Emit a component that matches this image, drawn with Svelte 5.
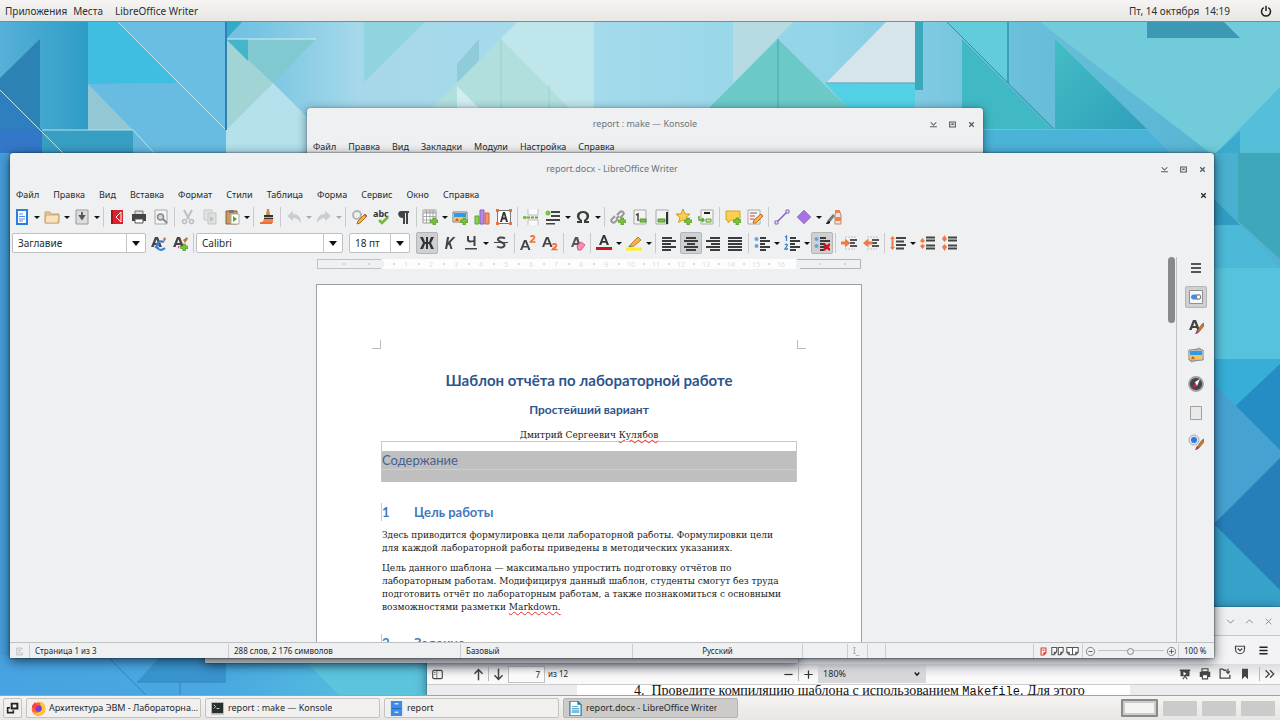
<script>
  const A = (c = '#444') => `<path d="M1 12 5 2h3l4 10H9.200l-.7-2H4.400l-.7 2zM5.100 8h2.700L6.500 4.200z" fill="${c}"/>`;
  const plus = '<path d="M11 9h2.500v2H16v2.500h-2.500V16H11v-2.500H8.500V11H11z" fill="#7cc242" stroke="#4e9a1c" stroke-width=".7"/>';
  const sheet = (x = 2, w = 12) => `<path d="M${x} 1h${w}v14H${x}z" fill="#f4f4f4" stroke="#aaa"/>`;
  const brush = '<path d="m9 13 5-7 2-1v3l-5 6z" fill="#c9772e" stroke="#7a4a1e" stroke-width=".5"/><path d="m9 12 2 2c-1 1.500-3 2-4 2 1-1 1-3 2-4z" fill="#9b3c7a"/>';
  const photo = '<path d="M1 3h14v10H1z" fill="#fff" stroke="#777"/><path d="M2 4h12v5H2z" fill="#2e9be6"/><path d="M2 8h12v4H2z" fill="#f6c35c"/><path d="m3 12 2-3 2 3z" fill="#d9532c"/>';
  const lines = (rows) => rows.map(([x, w], i) => `<path d="M${x} ${2 + i * 3}h${w}v2H${x}z" fill="#3c3c3c"/>`).join('');
  const orange = '#ee7b45';

  const icons = {
    new: '<path d="M3 1h10v14H3z" fill="#fff" stroke="#2b7de0" stroke-width="2"/><path d="M5 5h4M5 7.500h6M5 10h6M5 12h4" stroke="#4a90e2"/>',
    open: '<path d="M1 3h5l1 2h8v9H1z" fill="#e5c79a" stroke="#c9a468"/><path d="M2 6h13l-1 8H1z" fill="#f8e3c0" stroke="#d1ab70"/>',
    save: '<path d="M2 1h12v14H2z" fill="#dcdcdc" stroke="#9a9a9a"/><path d="M8 3v5M6 7l2 3 2-3z" stroke="#555" stroke-width="1.800" fill="#555"/>',
    pdf: '<path d="M2 1h12v14H2z" fill="#d8232f"/><path d="M2 1h2v14H2z" fill="#a8101c"/><path d="M12 3 7 8l5 5M12 3v10" stroke="#fff" fill="none"/>',
    print: '<path d="M4 2h8v4H4z" fill="#ddd" stroke="#777"/><path d="M1 5h14v7H1z" fill="#444"/><path d="M4 10h8v4H4z" fill="#fff" stroke="#555"/>',
    preview: sheet() + '<circle cx="7.500" cy="8" r="3" fill="#cfd8df" stroke="#888" stroke-width="1.500"/><path d="m10 10 4 4" stroke="#888" stroke-width="2"/>',
    cut: '<path d="m4 1 5 9M12 1 7 10" stroke="#b4b4b4" stroke-width="2"/><circle cx="4.500" cy="12.500" r="2" fill="none" stroke="#b0b0b0" stroke-width="1.500"/><circle cx="11.500" cy="12.500" r="2" fill="none" stroke="#b0b0b0" stroke-width="1.500"/>',
    copy: '<path d="M2 1h8v10H2z" fill="#e2e2e2" stroke="#c0c0c0"/><path d="M6 4h8v11H6z" fill="#dcdcdc" stroke="#bbb"/><path d="m8 7 4 3-4 3z" fill="#b5b5b5"/>',
    paste: '<path d="M2 2h11v13H2z" fill="#c89b5e" stroke="#8a6430"/><path d="M5 1h5v3H5z" fill="#777"/><path d="M7 5h8v10H7z" fill="#fff" stroke="#aaa"/><path d="m9 7 4 3-4 3z" fill="#5aa82b"/>',
    clone: '<path d="M8 0h2l1 6H7z" fill="#c98b45"/><path d="M5 6h9v4H5z" fill="#333"/><path d="M5 8h9v1H5z" fill="#ddb45c"/><path d="M5 10h9v4H3z" fill="#f0834a"/><path d="M1 13h12v2H1z" fill="#ee6f35"/>',
    undo: '<path d="m1 7 6-5v3c5 0 8 3 8 9-2-3-4-5-8-5v3z" fill="#c3c5c7"/>',
    redo: '<path d="M15 7 9 2v3C4 5 1 8 1 14c2-3 4-5 8-5v3z" fill="#c3c5c7"/>',
    find: '<circle cx="6" cy="6" r="4" fill="#eee" stroke="#b5b5b5" stroke-width="2"/><path d="m6 15 1-3 7-7 2 2-7 7z" fill="#f5b83d" stroke="#a86a2a"/><path d="m13 6 1-1 2 2-1 1z" fill="#e0446a"/>',
    spell: '<text x="0" y="8" font-size="9" font-weight="700" font-family="Noto Sans" fill="#333">abc</text><path d="m6 11 3 3 6-6" stroke="#6fb93c" stroke-width="2.500" fill="none"/>',
    pilcrow: '<path d="M6 2h8v2h-1v11h-2V4h-1v11H8V9C2 9 2 2 6 2z" fill="#444"/>',
    table: '<path d="M1 1h13v13H1z" fill="#fff" stroke="#999"/><path d="M1 1h13v3H1z" fill="#ccc"/><path d="M1 4h13M1 7.500h13M1 11h13M4.500 1v13M8 1v13M11 1v13" stroke="#999" stroke-width=".8"/>' + plus,
    image: photo + plus,
    chart: '<path d="M1 7h4v8H1z" fill="#8bcf5a" stroke="#5aa82b"/><path d="M6 1h4v14H6z" fill="#b98be8" stroke="#8a5cc0"/><path d="M11 4h4v11h-4z" fill="#f59468" stroke="#d0603a"/>',
    textbox: '<path d="M1.500 1.500h13v13h-13z" fill="#fff" stroke="#777"/><path d="M4 13 7 3h2l3 10h-2l-.7-2.500H6.700L6 13zM7.200 8.500h1.600L8 5.500z" fill="#333"/><path d="M0 0h3v3H0zM13 0h3v3h-3zM0 13h3v3H0zM13 13h3v3h-3z" fill="#ee6f45"/>',
    pagebreak: '<path d="M5 0v6h10V0M5 16v-5h10v5" fill="#fafafa" stroke="#c0c0c0"/><path d="M0 8.500h16" stroke="#62ad30" stroke-width="2" stroke-dasharray="3 1"/><circle cx="2" cy="8.500" r="1.800" fill="#7cc242"/>',
    field: '<path d="M6 2h9v2H6zM6 6h9v2H6zM1 10h14v2H1zM1 14h9v1.500H1z" fill="#444"/><circle cx="3" cy="4" r="2.500" fill="#7cc242"/>',
    omega: '<path d="M2 14v-2h3C0 9 1 2 8 2s8 7 3 10h3v2H9v-3c4-2 3-7-1-7s-5 5-1 7v3z" fill="#3c3c3c"/>',
    link: '<path d="m7 6 3-3c2-2 5 1 3 3l-3 3M9 7 6 10M8 10l-3 3c-2 2-5-1-3-3l3-3" fill="none" stroke="#999" stroke-width="2"/>' + plus,
    footnote: sheet() + '<path d="m4 6 2-1v7" fill="none" stroke="#444" stroke-width="1.500"/><path d="M8 10h6v3H8z" fill="#7cc242" stroke="#4e9a1c"/>',
    endnote: sheet() + '<path d="M12 3h2v12h-2z" fill="#333"/><path d="M4 10h7v3H4z" fill="#7cc242" stroke="#4e9a1c"/>',
    bookmark: '<path d="m7 0 2 5h5l-4 3.500 1.500 5L7 11l-4.500 2.500L4 8.500 0 5h5z" fill="#fbd04c" stroke="#d29a22"/>' + plus,
    crossref: '<path d="M3 1h12v14H3z" fill="#f4f4f4" stroke="#aaa"/><path d="M6 4h6" stroke="#222" stroke-width="2"/><path d="M8 10h5v3H8z" fill="#cbe6b8" stroke="#5aa82b"/><path d="M1 7v4h5M4 9l2 2-2 2" fill="none" stroke="#5aa82b" stroke-width="1.500"/>',
    comment: '<path d="M1 2h14v9H6l-3 3v-3H1z" fill="#fbd04c" stroke="#d2a22e"/>' + plus,
    track: sheet(1, 12) + '<path d="M3 4h7M3 7h5M3 10h4" stroke="#b34a5c"/><path d="m6 14 1-3 7-6 2 2-7 7z" fill="#f5b83d" stroke="#b8662a"/>',
    line: '<path d="M2.500 13.500 13.500 2.500" stroke="#8a5cc0" stroke-width="1.500"/><path d="M1 12h3v3H1zM12 1h3v3h-3z" fill="#eee" stroke="#8a5cc0"/>',
    shape: '<path d="m8 1 7 7-7 7-7-7z" fill="#a674e0" stroke="#a98ad0"/>',
    draw: '<path d="M10 3h4l1 3v9H9V6z" fill="#e5e5e5" stroke="#c08a70"/><path d="M9 1h5v3H9zM9 8h6v4H9z" fill="#f0834a"/><path d="m1 12 6-7 2 2-5 6z" fill="#777"/><path d="M0 15c1-3 2-3 4-3v2c-1 1-2 1-4 1z" fill="#222"/>',
    styleUpdate: A() + '<path d="M14 7c-4-2-8 1-7 5 1 3 5 4 8 1M9 9l-3 3 3 2" fill="none" stroke="#3d7fd0" stroke-width="2.200"/><path d="m13 4 2-2 1 2-2 3z" fill="#c9772e"/>',
    styleNew: A() + '<path d="m11 5 4-3 1 2-3 4z" fill="#c9772e"/>' + plus + '<path d="M8 11H6v3z" fill="#d048b0"/>',
    bold: '<path d="M1 2h3l2 5h1V2h2v5h1l2-5h3l-3 6 3 6h-3l-2-5H9v5H7V9H6l-2 5H1l3-6z" fill="#333"/>',
    italic: '<path d="M6 2h2.200L7.300 7 12 2h2.500L9.500 7.500 11.500 14H9.500L8 9.500l-1.200 1L6 14H4z" fill="#444"/>',
    underline: '<path d="M4 1h2v4q3 1 4.500 0V1h2v10h-2V7Q4 8.500 4 5z" fill="#444"/><path d="M2 13h12v1.500H2z" fill="#444"/>',
    strike: '<path d="M12 3.500c-2-1.500-7-1.500-7 1s6.500 2.500 6.500 5.500-5 3-7.500 1.500" fill="none" stroke="#444" stroke-width="2"/><path d="M1 7.500h14" stroke="#444"/>',
    sup: '<path d="M0 15 4 5h2.500l4 10H8.300l-.8-2.500H3L2.200 15zM3.700 11h3.100L5.200 7z" fill="#444"/><path d="M10.500 2c1-1.500 4-1.500 4 .5 0 1.500-3 2.500-4 4.500h5" fill="none" stroke="#ee6f35" stroke-width="1.700"/>',
    sub: '<path d="M0 12 4 2h2.500l4 10H8.300l-.8-2.500H3L2.200 12zM3.700 8h3.100L5.200 4z" fill="#444"/><path d="M10.500 10c1-1.500 4-1.500 4 .5 0 1.500-3 2.500-4 4h5" fill="none" stroke="#ee6f35" stroke-width="1.700"/>',
    clear: '<path d="M2 12 6 2h3l3 10H9.500L9 10H5l-.8 2zM5.700 8h2.600L7.300 4.500z" fill="#555"/><path d="m8 11 4-4 4 3-4 5H9z" fill="#f48fb8" stroke="#d45a90"/>',
    color: '<path d="M3 10 7 0h2l4 10h-2.300l-.8-2.300H6L5.300 10zM6.600 6h2.800L8 2.500z" fill="#333"/><path d="M0 12h16v3H0z" fill="#c8141c"/>',
    highlight: '<path d="m5 9 7-7 3 3-7 6-4 1z" fill="#f5b04a" stroke="#c08038"/><path d="m4 10-2 2h3z" fill="#777"/><path d="M0 12.500h16v3H0z" fill="#ffef1a"/>',
    left: lines([[1, 10], [1, 14], [1, 9], [1, 14], [1, 9]]),
    center: lines([[3, 10], [1, 14], [4, 8], [1, 14], [3, 10]]),
    right: lines([[5, 10], [1, 14], [6, 9], [1, 14], [5, 10]]),
    justify: lines([[1, 14], [1, 14], [1, 14], [1, 14], [1, 14]]),
    bullets: lines([[6, 6], [6, 10], [6, 5], [6, 10], [6, 6]]) + '<circle cx="2.500" cy="4" r="2" fill="#6ba3e0"/><circle cx="2.500" cy="11" r="2" fill="#6ba3e0"/>',
    numbers: lines([[6, 6], [6, 10], [6, 5], [6, 10], [6, 6]]) + '<path d="m1 2 1.500-1v5M1 10c1-1.500 3-.5 2 1l-2 3h3" fill="none" stroke="#3d7fd0" stroke-width="1.300"/>',
    nolist: lines([[6, 6], [6, 10], [6, 5], [6, 5], [6, 4]]) + '<circle cx="2.500" cy="4" r="2" fill="#6ba3e0"/><circle cx="2.500" cy="11" r="2" fill="#6ba3e0"/><path d="m10 9 6 6m0-6-6 6" stroke="#d2141c" stroke-width="2.500"/>',
    indent: `<path d="M9 5h7M9 8h5M9 11h7" stroke="#555" stroke-width="1.800"/><path d="M4 2h12M4 14h10" stroke="#c4c4c4" stroke-dasharray="2 1"/><path d="M0 6.500h4V3.500L9.500 8 4 12.500v-3H0z" fill="${orange}"/>`,
    outdent: `<path d="M9 5h7M9 8h5M9 11h7" stroke="#555" stroke-width="1.800"/><path d="M4 2h12M4 14h10" stroke="#c4c4c4" stroke-dasharray="2 1"/><path d="M9.500 6.500h-4V3.500L0 8l5.500 4.500v-3h4z" fill="${orange}"/>`,
    spacing: `<path d="M6 3h10M6 6.500h8M6 10h10M6 13.500h8" stroke="#444" stroke-width="2"/><path d="m0 4 2.500-3L5 4H3.500v8H5l-2.500 3L0 12h1.500V4z" fill="${orange}"/>`,
    paraInc: `<path d="M6 2.500h9M6 5.500h9M6 10.500h9M6 13.500h9" stroke="#444" stroke-width="2"/><path d="m0 6 2.500-3L5 6 2.500 8zM0 11l2.500-2L5 11l-2.500 3z" fill="${orange}"/>`,
    paraDec: `<path d="M6 2.500h9M6 5.500h9M6 10.500h9M6 13.500h9" stroke="#444" stroke-width="2"/><path d="m0 4 2.500 3L5 4 2.500 0zM0 12l2.500-3L5 12l-2.500 4z" fill="${orange}"/>`,
    burger: '<path d="M3 4h10M3 8h10M3 12h10" stroke="#222" stroke-width="1.700"/>',
    props: '<path d="M1.500 1.500h13v13h-13z" fill="#f7f7f7" stroke="#909090"/><rect x="3" y="5.500" width="10" height="5" rx="2.500" fill="#3d8eea"/><circle cx="10.500" cy="8" r="2.200" fill="#fff" stroke="#777"/>',
    styles: A() + brush,
    gallery: '<path d="m1 4 11-3 3 11-12 3z" fill="#ddd" stroke="#999"/>' + photo,
    navigator: '<circle cx="8" cy="8" r="7" fill="#3d474f" stroke="#a0a0a0" stroke-width="1.800"/><path d="m12 3-3 7-5 3 3-7z" fill="#d81b55"/><path d="m12 3-3 7-2-4z" fill="#fff"/>',
    page: '<path d="M2.500 1.500h11v13h-11z" fill="#e9e9e9" stroke="#a0a0a0"/>',
    inspector: '<circle cx="6" cy="6" r="5" fill="#dfe3e6" stroke="#aab"/><circle cx="6" cy="6" r="3" fill="#2e7be0"/>' + brush,
    close: '<path d="m4 4 8 8m0-8-8 8" fill="none" stroke="currentColor" stroke-width="2.200"/>',
    min: '<path d="m3 4 5 5 5-5M2 12h12" fill="none" stroke="currentColor" stroke-width="1.800"/>',
    max: '<path d="M3 3.500h10v9H3z" fill="none" stroke="currentColor" stroke-width="2"/><path d="M6 6h4v3H6z" fill="currentColor"/>',
    down: '<path d="m2 5 6 6 6-6" fill="none" stroke="currentColor" stroke-width="1.500"/>',
    drop: '<path d="m2 4 6 7 6-7" fill="none" stroke="#111" stroke-width="3.500"/>',
    up: '<path d="m2 11 6-6 6 6" fill="none" stroke="currentColor" stroke-width="1.500"/>',
    thinx: '<path d="m3 3 10 10m0-10L3 13" fill="none" stroke="currentColor" stroke-width="1.400"/>',
    power: '<path d="M5 3.500a6 6 0 1 0 6 0M8 1v7" fill="none" stroke="#222" stroke-width="2"/>',
    pocket: '<path d="M2 3h12v4a6 6 0 0 1-12 0zM5 6l3 3 3-3" fill="none" stroke="#444" stroke-width="1.600"/>',
    panel: '<rect x="1" y="2" width="14" height="12" rx="2" fill="none" stroke="#444" stroke-width="1.600"/><path d="M7 2v12M3 5h2M3 8h2" stroke="#444"/>',
    arrowUp: '<path d="M8 15V2M3 7l5-5 5 5" fill="none" stroke="#444" stroke-width="1.800"/>',
    arrowDown: '<path d="M8 1v13M3 9l5 5 5-5" fill="none" stroke="#444" stroke-width="1.800"/>',
    minus: '<path d="M2 8h12" stroke="#333" stroke-width="1.800"/>',
    plus: '<path d="M2 8h12M8 2v12" stroke="#333" stroke-width="1.800"/>',
    present: '<path d="M1 2h14v2H1zM2 4h12v7H2z" fill="#444"/><path d="m6 5 4 2.500L6 10z" fill="#fff"/><path d="m8 11-3 4M8 11l3 4" stroke="#444" stroke-width="1.500"/>',
    printer: '<path d="M4 1h8v4H4z" fill="none" stroke="#444" stroke-width="1.500"/><path d="M1 5h14v7H1z" fill="#444"/><path d="M4.500 9h7v5.500h-7z" fill="#fff" stroke="#444" stroke-width="1.500"/>',
    folder: '<path d="M10 3H7L5 1.500H1.500v12h13V9M12 1v6M9.500 4.500 12 7l2.500-2.500" fill="none" stroke="#444" stroke-width="1.700"/>',
    ribbon: '<path d="M4 1h8v14l-4-4-4 4z" fill="#444"/>',
    more: '<path d="m2 3 5 5-5 5M8 3l5 5-5 5" fill="none" stroke="#444" stroke-width="1.700"/>',
    windows: '<path d="M7 2h7v6H7z" fill="none" stroke="#222" stroke-width="2.400"/><path d="M5 7H2v6h7v-3" fill="none" stroke="#222" stroke-width="2"/>',
    edit: '<path d="M11 3H4v10h8V9M7 8l6-5M6 6h3M6 10h4" fill="none" stroke="#aaa"/>',
    one: '<path d="M4.500 3h7v7l-3 3h-4zM8.500 13v-3h3M6.500 6h3" fill="#fff" stroke="#e03a2c" stroke-width="1.600"/>',
    two: '<path d="M1 3h6v5l-3 4H1zM4 12V9h3M9 3h6v5l-3 4H9zM12 12V9h3" fill="#fff" stroke="#555" stroke-width="1.300"/>',
    book: '<path d="M1 3h7v9H4L1 9zM1 9h3v3M8 3h7v6l-3 3H8zM12 12V9h3" fill="#fff" stroke="#555" stroke-width="1.300"/>',
    zoomOut: '<circle cx="8" cy="8" r="6" fill="none" stroke="#777" stroke-width="1.300"/><path d="M5 8h6" stroke="#555" stroke-width="1.300"/>',
    zoomIn: '<circle cx="8" cy="8" r="6" fill="none" stroke="#777" stroke-width="1.300"/><path d="M4.500 8h7M8 4.500v7" stroke="#555" stroke-width="1.300"/>',
    firefox: '<circle cx="8" cy="8.500" r="7.300" fill="#ff6a2a"/><path d="M12 1c4 3 5 11-1 14-4 1-8-1-10-5 3 4 9 3 10-1 1-3-2-4-1-8z" fill="#ffc832"/><circle cx="8" cy="8" r="3.500" fill="#7a3fd0"/><path d="M1 5 3 3l1-2 2 3 3 1-3 1-1 3c-2 0-4-2-4-4z" fill="#ff3d4f"/>',
    konsole: '<path d="M1 1h14v14H1z" fill="#c8cccc"/><path d="M2 2h12v11H2z" fill="#26302f"/><path d="m4 4 2 2-2 2M7 8h3" stroke="#d7dcdc" fill="none"/>',
    files: '<path d="M2 0h12v16H2z" fill="#3c8be6"/><path d="M3 8h10" stroke="#1f66b8"/><path d="M6 3h4M6 12h4" stroke="#cfe3fa" stroke-width="1.500"/>',
    writer: '<path d="M2 0h8l4 4v12H2z" fill="#fff" stroke="#2682b5" stroke-width="1.400"/><path d="M10 0v4h4z" fill="#1677a8"/><path d="M4 6h7M4 8h8" stroke="#58a8d0"/><path d="M4 9h8v4H4z" fill="#7dbfdc"/>',
  };

  // '|' separates groups, '>' marks a button that opens a menu, '*' a pressed one, '-' a disabled one
  const standard = 'new> open> save> | pdf print preview | cut- copy- paste> | clone | undo-> redo-> | find spell pilcrow | table> image chart textbox | pagebreak field> omega> | link footnote endnote bookmark crossref | comment track | line shape> draw'.split(' ');
  const formatting = 'bold* italic underline> strike | sup sub | clear | color> highlight> | left center* right justify | bullets> numbers> nolist* | indent outdent | spacing> paraInc paraDec'.split(' ');
  const menu = ['Файл', 'Правка', 'Вид', 'Вставка', 'Формат', 'Стили', 'Таблица', 'Форма', 'Сервис', 'Окно', 'Справка'];
  const konsoleMenu = ['Файл', 'Правка', 'Вид', 'Закладки', 'Модули', 'Настройка', 'Справка'];
  const sidebar = ['burger', 'props', 'styles', 'gallery', 'navigator', 'page', 'inspector'];
  const tasks = [
    ['firefox', 'Архитектура ЭВМ - Лабораторна…'],
    ['konsole', 'report : make — Konsole'],
    ['files', 'report'],
    ['writer', 'report.docx - LibreOffice Writer'],
  ];
  const ruler = Array.from({ length: 16 }, (_, i) => i + 1);
</script>

{#snippet icon(name, size = 16)}
  <svg width={size} height={size} viewBox="0 0 16 16" aria-hidden="true">{@html icons[name]}</svg>
{/snippet}

{#snippet tools(list)}
  {#each list as item}
    {#if item === '|'}
      <span class="sep"></span>
    {:else}
      {@const name = item.replace(/[^a-zA-Z]/g, '')}
      <button class="tool" class:pressed={item.includes('*')} disabled={item.includes('-')} aria-label={name}>{@render icon(name)}</button>
      {#if item.includes('>')}
        <button class="caret" class:dim={item.includes('-')} aria-label={name + ' menu'}></button>
      {/if}
    {/if}
  {/each}
{/snippet}

{#snippet controls()}
  <div class="controls">
    {#each ['min', 'max', 'close'] as c}
      <button aria-label={c}>{@render icon(c, 9)}</button>
    {/each}
  </div>
{/snippet}

<div class="desktop">
  <svg class="wallpaper" viewBox="0 0 1280 720" preserveAspectRatio="xMidYMid slice" aria-hidden="true">
    <defs>
      <linearGradient id="base"><stop offset="0" stop-color="#4ea9dc" /><stop offset=".2" stop-color="#76c4e2" /><stop offset=".28" stop-color="#a6d8ea" /><stop offset=".45" stop-color="#a6dbec" /><stop offset=".65" stop-color="#92d4e8" /><stop offset=".8" stop-color="#69bfda" /><stop offset="1" stop-color="#50b2d1" /></linearGradient>
      <linearGradient id="floor"><stop offset="0" stop-color="#48a3e2" /><stop offset=".5" stop-color="#48a8e0" /><stop offset="1" stop-color="#5cc6df" /></linearGradient>
      <linearGradient id="deep"><stop offset="0" stop-color="#57b0d8" /><stop offset="1" stop-color="#2d9dc6" /></linearGradient>
      <linearGradient id="teal" x1="0" y1="0" x2="1" y2="1"><stop offset="0" stop-color="#43bec4" /><stop offset="1" stop-color="#2f9fba" /></linearGradient>
    </defs>
    <path d="M0 0h1280v720H0z" fill="url(#base)" />
    <path d="M0 130h42l30 590H0z" fill="#459fda" />
    <path d="M0 22h88v108H0z" fill="url(#deep)" />
    <path d="M0 78 40 39v90L0 90z" fill="#2b82b3" />
    <path d="m0 90 40 39H0z" fill="#2f7fc0" />
    <path d="M0 129h42v24H0z" fill="#3378c8" />
    <path d="M88 22h30l59 61H88z" fill="#3fbee2" />
    <path d="M88 84h89l49 46v23h-72z" fill="#68bce2" />
    <path d="m88 84 45 46H88z" fill="#94c7d4" />
    <path d="M42 130h91v24H42z" fill="#379fc3" />
    <path d="M118 22h108v108z" fill="#6abee1" />
    <path d="m118 22 108 108M42 130h91l22 24M0 90l64 64" stroke="#b8e2ee" fill="none" />
    <path d="M226 22h16l-16 17z" fill="#32aac8" />
    <path d="M226 39h90l-43 44z" fill="#80c9d0" />
    <path d="m226 39 47 44-47 47z" fill="#a0d4d5" />
    <path d="m226 39 22 22V39z" fill="#43b7c9" />
    <path d="m273 83 40 40v31h-87v-24z" fill="#b4e1eb" />
    <path d="M226 39h90" stroke="#d2eef2" /><path d="M226 22v108" stroke="#2f80b4" stroke-width="2" />
    <path d="M364 22h61l-61 60z" fill="#91d4df" />
    <path d="M517 22h77v132H390z" fill="#bfe6eb" />
    <path d="m479 39-22 25v19l22-22z" fill="#8fcbd8" />
    <path d="m501 39-69 69h137z" fill="#b0dfdd" />
    <path d="m457 86 22 22h-22z" fill="#d0edef" /><path d="M501 39v69M549 86v22" stroke="#9bd0d3" />
    <path d="M733 22h60l-60 61z" fill="#b6dbe0" />
    <path d="m778 39-69 69h139z" fill="#6bcac7" /><path d="M778 39v69" stroke="#4aa7ad" />
    <path d="M886 22h29v61h-89z" fill="#d6e4ec" />
    <path d="M826 84h89v24h-67z" fill="#52d1e7" /><path d="M826 83h89" stroke="#4c99b1" />
    <path d="M915 22h8v68h-8z" fill="#3ba7bc" />
    <path d="M947 22h61v61z" fill="#62cbdc" /><path d="M1008 22v61" stroke="#3c9fb9" stroke-width="2" />
    <path d="m962 39 91 90h-91z" fill="#40b9c4" /><path d="m947 22 107 107" stroke="#2e90b2" />
    <path d="M1040 22h240v185z" fill="#71cbda" />
    <path d="m1055 39 92 90h-92z" fill="url(#teal)" />
    <path d="M962 130h185l24 24H915z" fill="#4bb3d8" />
    <path d="M1147 22h77l16 16h-93z" fill="#3d98b4" />
    <path d="m1280 87-70 72h70z" fill="#55bfd9" /><path d="m1240 131-26 24h26z" fill="#3ca9ce" />
    <path d="M1210 153h28v72h-28z" fill="#49b0cf" /><path d="M1238 153h42v106l-42-38z" fill="#3ea7b9" />
    <path d="m1210 195 30 30h-30z" fill="#319dc3" /><path d="M1210 225h30l40 43h-70z" fill="#4db9d8" />
    <path d="M1210 268h70v91h-70z" fill="#57c2db" />
    <path d="M1210 359h70v90h-70z" fill="#37aed7" />
    <path d="m1280 364-70 66v177h70z" fill="#258dc4" /><path d="m1210 380 70 70v157h-70z" fill="#47a2d2" />
    <path d="m1280 458-66 66v83h66z" fill="#277fba" /><path d="m1214 524 66 66v17h-66z" fill="#36a1c9" />
    <path d="M0 655h430v65H0z" fill="url(#floor)" />
    <path d="m137 682 24-26h65v26z" fill="#3994ce" /><path d="m107 656 40 40M137 682h89M180 682v14" stroke="#3582c2" fill="none" />
    <path d="m300 656 40 40h90v-40z" fill="#5cc4dc" />
  </svg>

  <header class="panel">
    <nav><a href="#apps">Приложения</a><a href="#places">Места</a><a href="#writer" class="app">LibreOffice Writer</a></nav>
    <div class="clock"><time>Пт, 14 октября&nbsp; 14:19</time><button aria-label="power">{@render icon('power', 12)}</button></div>
  </header>

  <section class="window firefox">
    <div class="ff-title">
      {#each ['down', 'up', 'thinx'] as c}<button aria-label={c}>{@render icon(c, 9)}</button>{/each}
    </div>
    <div class="ff-nav"><button aria-label="pocket">{@render icon('pocket', 12)}</button><button aria-label="menu">{@render icon('burger', 13)}</button></div>
    <div class="ff-pdf">
      <button class="pane" aria-label="sidebar">{@render icon('panel', 11)}</button>
      <button aria-label="previous">{@render icon('arrowUp', 13)}</button><i></i>
      <button aria-label="next">{@render icon('arrowDown', 13)}</button>
      <input aria-label="page" value="7" /><span>из 12</span>
      <div class="scale">
        <button aria-label="zoom out">{@render icon('minus', 11)}</button><i></i><button aria-label="zoom in">{@render icon('plus', 11)}</button>
        <div class="ff-select"><select aria-label="zoom"><option>180%</option></select>{@render icon('drop', 6)}</div>
      </div>
      <div class="ff-right">
        {#each ['present', 'printer', 'folder', 'ribbon'] as c}<button aria-label={c}>{@render icon(c, 12)}</button>{/each}
        <div class="more"><i></i><button aria-label="more">{@render icon('more', 12)}</button></div>
      </div>
    </div>
    <div class="ff-body"><p>4.&nbsp; Проведите компиляцию шаблона с использованием <code>Makefile</code>. Для этого</p></div>
  </section>

  <section class="window back"></section>

  <section class="window konsole">
    <div class="title"><h2>report : make — Konsole</h2>{@render controls()}</div>
    <nav class="menu">{#each konsoleMenu as m}<a href="#menu">{m}</a>{/each}</nav>
  </section>

  <section class="window writer">
    <div class="title"><h2>report.docx - LibreOffice Writer</h2>{@render controls()}</div>
    <nav class="menu wide">{#each menu as m}<a href="#menu">{m}</a>{/each}<button class="doc-close" aria-label="close document">{@render icon('close', 9)}</button></nav>
    <div class="bar">{@render tools(standard)}</div>
    <div class="bar second">
      <div class="combo style"><select aria-label="paragraph style"><option>Заглавие</option></select></div>
      {@render tools(['styleUpdate', 'styleNew', '|'])}
      <div class="combo font"><select aria-label="font"><option>Calibri</option></select></div>
      <div class="combo size"><select aria-label="font size"><option>18 пт</option></select></div>
      {@render tools(formatting)}
    </div>

    <div class="work">
      <div class="canvas">
        <svg class="ruler" viewBox="0 0 546 12" aria-hidden="true">
          <path d="M1 1.500h64M1 10.500h64M1.500 1v10" stroke="#c0c1c3" />
          <path d="M66 1h414v10H66l3-5z" fill="#fdfdfd" />
          <path d="M481 1.500h63.500v9H484" fill="none" stroke="#b4b5b7" />
          {#each ruler as n}
            <path d="M{53 + n * 25} 5v2" stroke="#b9babd" />
            <text x={65 + n * 25} y="9" text-anchor="middle">{n}</text>
          {/each}
          <path d="M28 5v2M53 5v2M504 5v2M529 5v2" stroke="#b9babd" />
        </svg>
        <article class="page">
          <div class="corners"><span></span><span></span></div>
          <h1>Шаблон отчёта по лабораторной работе</h1>
          <h3>Простейший вариант</h3>
          <p class="author">Дмитрий Сергеевич <u>Кулябов</u></p>
          <div class="toc"><div>Содержание</div></div>
          <h2><span>1</span>Цель работы</h2>
          <p>Здесь приводится формулировка цели лабораторной работы. Формулировки цели<br />для каждой лабораторной работы приведены в методических указаниях.</p>
          <p>Цель данного шаблона — максимально упростить подготовку отчётов по<br />лабораторным работам. Модифицируя данный шаблон, студенты смогут без труда<br />подготовить отчёт по лабораторным работам, а также познакомиться с основными<br />возможностями разметки <u>Markdown.</u></p>
          <h2><span>2</span>Задание</h2>
        </article>
      </div>
      <div class="scroll"><span></span></div>
      <aside>
        {#each sidebar as s}<button class:pressed={s === 'props'} aria-label={s}>{@render icon(s)}</button>{/each}
      </aside>
    </div>

    <footer class="status">
      <span>{@render icon('edit', 11)}</span>
      <span>Страница 1 из 3</span>
      <span>288 слов, 2 176 символов</span>
      <span>Базовый</span>
      <span class="mid">Русский</span>
      <span></span>
      <span class="ins">I_</span>
      <span></span>
      <span></span>
      <span class="views">{@render icon('one', 11)}{@render icon('two', 13)}{@render icon('book', 13)}</span>
      <span class="zoom"><button aria-label="zoom out">{@render icon('zoomOut', 11)}</button><input type="range" aria-label="zoom" value="50" /><button aria-label="zoom in">{@render icon('zoomIn', 11)}</button></span>
      <span>100 %</span>
    </footer>
  </section>

  <footer class="taskbar">
    <button class="show" aria-label="show desktop">{@render icon('windows', 13)}</button>
    {#each tasks as [name, label]}
      <button class="task" class:active={name === 'writer'}>{@render icon(name, 15)}<span>{label}</span></button>
    {/each}
    <div class="spaces">
      {#each [1, 2, 3, 4] as n}<button class:current={n === 1} aria-label={'workspace ' + n}></button>{/each}
    </div>
  </footer>
</div>

<style>
  :global(body) { margin: 0; }
  * { box-sizing: border-box; }
  svg { display: block; flex: none; }
  button { border: 0; padding: 0; background: none; font: inherit; color: inherit; display: flex; align-items: center; justify-content: center; }
  select, input { font: inherit; color: inherit; border: 0; margin: 0; padding: 0; background: none; appearance: none; border-radius: 0; }
  a { color: inherit; text-decoration: none; }
  h1, h2, h3, p { margin: 0; }

  .desktop { position: relative; height: 100vh; min-height: 600px; overflow: hidden; display: flex; flex-direction: column; justify-content: space-between; font: 9px/14px "Noto Sans", sans-serif; color: #25292d; }
  .wallpaper { position: absolute; inset: 0; width: 100%; height: 100%; }

  .panel { position: relative; height: 22px; flex: none; display: flex; align-items: center; justify-content: space-between; padding: 0 8px 0 5px; background: linear-gradient(#f5f4f2, #e9e7e4); border-bottom: 1px solid #84898a; font-size: 10px; color: #2c3032; }
  .panel nav { display: flex; gap: 6px; }
  .panel .app { margin-left: 6px; }
  .clock { display: flex; align-items: center; gap: 30px; }

  .window { position: absolute; background: #eff0f1; box-shadow: 0 2px 10px rgba(0, 20, 40, .55), 0 0 1px #333; }
  .konsole { left: 307px; width: 676px; top: 108px; height: 300px; border-radius: 3px 3px 0 0; }
  .back { left: 205px; width: 593px; height: 200px; bottom: 57px; background: #d5d6d7; }
  .firefox { left: 427px; right: 0; bottom: 25px; height: 88px; display: flex; flex-direction: column; background: #f7f7f8; }
  .writer { left: 10px; right: 66px; top: 153px; bottom: 62px; border-radius: 3px 3px 0 0; display: flex; flex-direction: column; overflow: hidden; box-shadow: 0 3px 12px rgba(0, 10, 25, .65), 0 0 2px #222; }

  .title { height: 32px; flex: none; display: grid; grid-template-columns: 1fr auto 1fr; align-items: center; }
  .title h2 { grid-column: 2; font-size: 9px; font-weight: 400; color: #6c757e; }
  .controls { display: flex; justify-content: flex-end; gap: 10px; padding-right: 7px; color: #4d5a66; }
  .menu { display: flex; align-items: center; gap: 12px; height: 14px; padding: 0 6px; }
  .wide { height: 20px; gap: 14px; flex: none; }
  .doc-close { margin-left: auto; color: #222; }

  .bar { display: flex; align-items: center; flex: none; height: 24px; padding-left: 1px; }
  .second { height: 28px; padding-left: 2px; font-size: 10px; }
  .tool { width: 22px; height: 22px; flex: none; border-radius: 2px; }
  .tool:disabled { opacity: .8; }
  .pressed { background: #cfd0d2; border: 1px solid #b4b5b7; }
  .caret { width: 8px; height: 22px; flex: none; }
  .caret::before, .combo::after { content: ""; border: 3px solid transparent; border-top-color: #111; border-bottom: 0; }
  .caret.dim::before { border-top-color: #aaa; }
  .sep { width: 1px; height: 20px; margin: 0 2px; background: #c9cacc; flex: none; }
  .combo { display: flex; align-items: center; height: 20px; flex: none; background: #fff; border: 1px solid #bfc0c2; border-radius: 2px; }
  .combo::after { border-width: 5px 4px 0; margin: 0 5px; }
  .combo select { flex: 1; min-width: 0; height: 18px; padding-left: 5px; border-right: 1px solid #c5c6c8; }
  .style { width: 134px; margin-right: 1px; }
  .font { width: 147px; }
  .size { width: 61px; margin: 0 6px; }

  .work { flex: 1; min-height: 0; display: flex; }
  .canvas { flex: 1; overflow: hidden; display: flex; flex-direction: column; align-items: center; }
  .ruler { width: 546px; height: 12px; margin-top: 1px; }
  .ruler text { font: 7px "Noto Sans", sans-serif; fill: #dcdde0; }
  .page { width: 546px; min-height: 700px; flex: none; margin-top: 14px; padding: 55px 64px 0; background: #fff; border: 1px solid #9fa2a5; color: #1a1a1a; font: 10px/13px "DejaVu Serif Condensed", "DejaVu Serif", serif; }
  .corners { display: flex; justify-content: space-between; margin: 0 -9px; }
  .corners span { width: 9px; height: 9px; border: solid #bbb; border-width: 0 1px 1px 0; }
  .corners span + span { border-width: 0 0 1px 1px; }
  h1, h3, .page h2, .toc { font-family: Lato, sans-serif; }
  h1 { margin-top: 21px; font-size: 15px; line-height: 20px; text-align: center; color: #2e558c; }
  h3 { margin-top: 12px; font-size: 12px; line-height: 16px; text-align: center; color: #2e558c; }
  .author { margin-top: 11px; line-height: 12px; text-align: center; }
  .toc { margin-bottom: 2px; padding-top: 9px; border: 1px solid #c8c8c8; border-bottom: 0; font-size: 13px; line-height: 18px; color: #46618f; }
  .toc div { background: linear-gradient(#bfbfbf 18px, #cdcdcd 18px 19px, #bfbfbf 19px); height: 31px; }
  .page h2 { display: flex; margin-top: 21px; font-size: 13px; line-height: 18px; color: #4479be; }
  .page h2 span { width: 33px; border-left: 1px solid #ccc; }
  .page p:not(.author) { margin-top: 7px; padding-left: 1px; white-space: nowrap; }
  u { text-decoration: underline wavy #e03030 1px; text-underline-offset: 1px; }

  .scroll { width: 9px; border-right: 1px solid #c0c1c3; display: flex; }
  .scroll span { width: 7px; height: 66px; border-radius: 4px; background: #88898b; }
  aside { width: 37px; display: flex; flex-direction: column; align-items: center; gap: 7px; }
  aside button { width: 22px; height: 22px; border-radius: 2px; }

  .status { flex: none; height: 16px; border-top: 1px solid #bfc0c2; display: grid; grid-template-columns: 20px 199fr 232fr 172fr 170fr 45fr 20px 18px 148fr 49px 96px 35px; font-size: 8px; line-height: 14px; }
  .status > span { display: flex; align-items: center; padding: 0 5px; white-space: nowrap; border-right: 1px solid #cbccce; margin: 1px 0; }
  .status > span:first-child { padding: 0 4px; }
  .status > span:last-child { border: 0; }
  .status .mid { justify-content: center; }
  .status .ins { color: #999; }
  .status .views, .status .zoom { gap: 2px; justify-content: center; }
  .zoom input { width: 66px; height: 8px; background: linear-gradient(transparent 3px, #c0c1c3 3px 4px, transparent 4px); }
  .zoom input::-webkit-slider-thumb { appearance: none; width: 7px; height: 7px; border: 1px solid #888; border-radius: 50%; background: #eee; }

  .ff-title, .ff-nav { height: 29px; display: flex; align-items: center; justify-content: flex-end; flex: none; }
  .ff-title { background: #eff0f1; border-bottom: 1px solid #c4c5c7; gap: 10px; padding-right: 7px; color: #777; }
  .ff-nav { gap: 11px; padding-right: 10px; height: 28px; background: #f3f3f5; }
  .ff-pdf { height: 20px; flex: none; display: flex; align-items: center; gap: 3px; padding: 0 4px 0 5px; background: linear-gradient(#dcdcde, #f9f9fa 14px); font-size: 8px; }
  .ff-pdf i { width: 1px; height: 14px; background: #b8b8ba; }
  .pane { margin-right: 26px; }
  .ff-pdf input { width: 37px; height: 17px; border: 1px solid #c0c0c2; padding-right: 4px; text-align: right; background: #fbfbfb; }
  .scale, .ff-right, .ff-select, .more { display: flex; align-items: center; }
  .scale { margin-left: 212px; gap: 4px; }
  .ff-select { width: 108px; height: 18px; padding: 0 6px 0 5px; background: #d7d7db; font-size: 9px; }
  .ff-select select { flex: 1; min-width: 0; }
  .ff-right { margin-left: auto; gap: 8px; }
  .more { gap: 4px; }
  .ff-body { flex: 1; min-height: 0; overflow: hidden; background: #ececee; border-top: 1px solid #ccc; padding: 0 150px; }
  .ff-body p { padding-left: 57px; background: #fff; color: #111; font: 14px/12px "Liberation Serif", serif; white-space: nowrap; }
  code { font: 12px/12px "Liberation Mono", monospace; }

  .taskbar { position: relative; height: 25px; flex: none; display: flex; align-items: center; gap: 4px; padding: 0 5px 0 3px; background: linear-gradient(#f5f4f2, #e8e6e3); border-top: 1px solid #a0a2a3; }
  .show, .task { height: 20px; border: 1px solid #c3c2c0; border-radius: 2px; background: #f1f0ee; }
  .show { width: 19px; flex: none; }
  .task { width: 175px; flex: 0 1 175px; justify-content: flex-start; gap: 3px; padding: 0 0 0 4px; min-width: 0; }
  .task span { white-space: nowrap; overflow: hidden; }
  .task.active { background: #cccbc9; border-color: #b5b4b2; }
  .spaces { margin-left: auto; display: flex; align-items: center; gap: 5px; }
  .spaces button { width: 34px; height: 15px; background: #cbcbcb; border-radius: 1px; }
  .spaces .current { height: 18px; width: 37px; background: #f4f4f2; border: 2px solid #8a8a8a; box-shadow: inset 0 0 0 2px #ccc; }
</style>
